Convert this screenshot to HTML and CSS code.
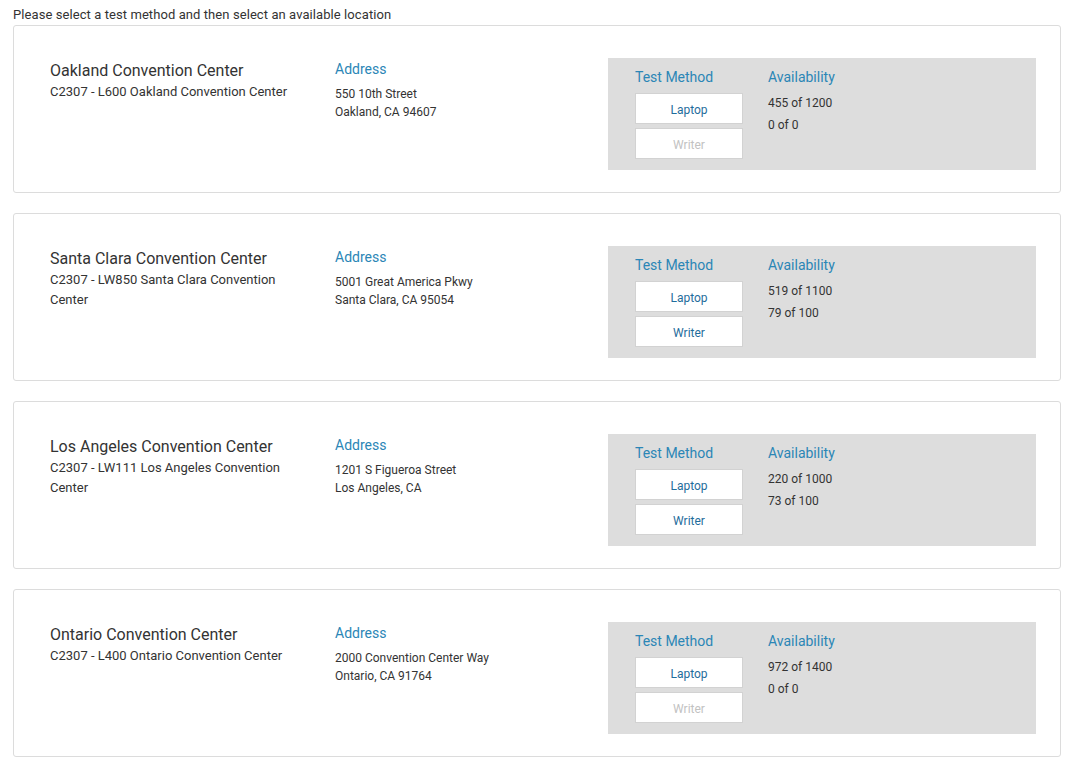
FILE: index.html
```html
<!DOCTYPE html>
<html>
<head>
<meta charset="utf-8">
<link rel="stylesheet" href="styles.css">
</head>
<body>
<div class="page">
  <p class="intro">Please select a test method and then select an available location</p>

  <div class="card">
    <div class="loc">
      <div class="loc-name">Oakland Convention Center</div>
      <div class="loc-code">C2307 - L600 Oakland Convention Center</div>
    </div>
    <div class="addr">
      <div class="label">Address</div>
      <div class="addr-line">550 10th Street</div>
      <div class="addr-line">Oakland, CA 94607</div>
    </div>
    <div class="panel">
      <div class="methods">
        <div class="label">Test Method</div>
        <button class="btn">Laptop</button>
        <button class="btn disabled">Writer</button>
      </div>
      <div class="avail">
        <div class="label">Availability</div>
        <div class="avail-line">455 of 1200</div>
        <div class="avail-line">0 of 0</div>
      </div>
    </div>
  </div>

  <div class="card">
    <div class="loc">
      <div class="loc-name">Santa Clara Convention Center</div>
      <div class="loc-code">C2307 - LW850 Santa Clara Convention Center</div>
    </div>
    <div class="addr">
      <div class="label">Address</div>
      <div class="addr-line">5001 Great America Pkwy</div>
      <div class="addr-line">Santa Clara, CA 95054</div>
    </div>
    <div class="panel">
      <div class="methods">
        <div class="label">Test Method</div>
        <button class="btn">Laptop</button>
        <button class="btn">Writer</button>
      </div>
      <div class="avail">
        <div class="label">Availability</div>
        <div class="avail-line">519 of 1100</div>
        <div class="avail-line">79 of 100</div>
      </div>
    </div>
  </div>

  <div class="card">
    <div class="loc">
      <div class="loc-name">Los Angeles Convention Center</div>
      <div class="loc-code">C2307 - LW111 Los Angeles Convention Center</div>
    </div>
    <div class="addr">
      <div class="label">Address</div>
      <div class="addr-line">1201 S Figueroa Street</div>
      <div class="addr-line">Los Angeles, CA</div>
    </div>
    <div class="panel">
      <div class="methods">
        <div class="label">Test Method</div>
        <button class="btn">Laptop</button>
        <button class="btn">Writer</button>
      </div>
      <div class="avail">
        <div class="label">Availability</div>
        <div class="avail-line">220 of 1000</div>
        <div class="avail-line">73 of 100</div>
      </div>
    </div>
  </div>

  <div class="card">
    <div class="loc">
      <div class="loc-name">Ontario Convention Center</div>
      <div class="loc-code">C2307 - L400 Ontario Convention Center</div>
    </div>
    <div class="addr">
      <div class="label">Address</div>
      <div class="addr-line">2000 Convention Center Way</div>
      <div class="addr-line">Ontario, CA 91764</div>
    </div>
    <div class="panel">
      <div class="methods">
        <div class="label">Test Method</div>
        <button class="btn">Laptop</button>
        <button class="btn disabled">Writer</button>
      </div>
      <div class="avail">
        <div class="label">Availability</div>
        <div class="avail-line">972 of 1400</div>
        <div class="avail-line">0 of 0</div>
      </div>
    </div>
  </div>
</div>
</body>
</html>
```

FILE: styles.css
```css
* { box-sizing: border-box; }
html, body { margin: 0; padding: 0; background: #fff; }
body {
  font-family: Roboto, "Liberation Sans", Arial, sans-serif;
  color: #333;
}
.page {
  padding: 6px 12px 0 13px;
}
.intro {
  margin: 0 0 1px 0;
  font-size: 13px;
  line-height: 18px;
  letter-spacing: 0.08px;
  color: #333;
}
.card {
  display: flex;
  height: 168px;
  border: 1px solid #dcdcdc;
  border-radius: 3px;
  padding: 32px 24px 22px 36px;
  margin-bottom: 20px;
}
.loc {
  width: 285px;
  padding-right: 30px;
  padding-top: 2px;
}
.loc-name {
  font-size: 16px;
  line-height: 22px;
  color: #333;
}
.loc-code {
  font-size: 13px;
  line-height: 20px;
  color: #333;
}
.addr {
  width: 273px;
  padding-top: 1px;
}
.label {
  font-size: 14px;
  line-height: 20px;
  color: #2b86b6;
}
.addr .label { margin-bottom: 6px; }
.addr-line {
  font-size: 12px;
  line-height: 18px;
  color: #333;
}
.panel {
  flex: 1;
  display: flex;
  background: #dddddd;
  padding: 9px 20px 11px 27px;
}
.methods {
  width: 133px;
  display: flex;
  flex-direction: column;
  align-items: flex-start;
}
.methods .label { margin-bottom: 6px; }
.btn {
  flex-shrink: 0;
  width: 108px;
  height: 31px;
  margin: 0;
  padding: 2px 0 0 0;
  background: #fff;
  border: 1px solid #d2d2d2;
  border-radius: 0;
  font-family: Roboto, "Liberation Sans", Arial, sans-serif;
  font-size: 12px;
  color: #1f6d9c;
  cursor: pointer;
}
.btn + .btn { margin-top: 4px; }
.btn.disabled { color: #c2c2c2; }
.avail .label { margin-bottom: 5px; }
.avail-line {
  font-size: 12px;
  line-height: 22px;
  color: #333;
}
```
